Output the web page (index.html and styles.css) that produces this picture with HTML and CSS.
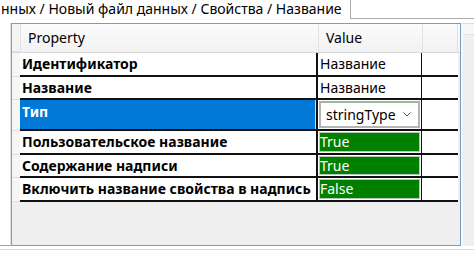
FILE: index.html
```html
<!DOCTYPE html>
<html lang="ru">
<head>
<meta charset="utf-8">
<link rel="stylesheet" href="styles.css">
</head>
<body>
<div class="tabbar">
  <div class="tab"><span class="tab-text">нных / Новый файл данных / Свойства / Название</span></div>
  <div class="tab-rest"></div>
</div>
<div class="main">
  <div class="left-gap"></div>
  <div class="grid">
    <div class="row head">
      <div class="rh"></div>
      <div class="hc">Property</div>
      <div class="hc">Value</div>
      <div class="hc last"></div>
    </div>
    <div class="row r24">
      <div class="rh"></div>
      <div class="c name">Идентификатор</div>
      <div class="c val">Название</div>
      <div class="c empty"></div>
    </div>
    <div class="row r23">
      <div class="rh"></div>
      <div class="c name">Название</div>
      <div class="c val">Название</div>
      <div class="c empty"></div>
    </div>
    <div class="row r31">
      <div class="rh"></div>
      <div class="c name sel">Тип</div>
      <div class="c val combo-cell">
        <div class="combo"><span>stringType</span>
          <svg class="chev" width="8" height="5" viewBox="0 0 8 5"><path d="M0.5 0.5 L4 4 L7.5 0.5" fill="none" stroke="#555" stroke-width="1"/></svg>
        </div>
      </div>
      <div class="c empty"></div>
    </div>
    <div class="row r24">
      <div class="rh"></div>
      <div class="c name">Пользовательское название</div>
      <div class="c val green-cell"><div class="green">True</div></div>
      <div class="c empty"></div>
    </div>
    <div class="row r23">
      <div class="rh"></div>
      <div class="c name">Содержание надписи</div>
      <div class="c val green-cell"><div class="green">True</div></div>
      <div class="c empty"></div>
    </div>
    <div class="row r24">
      <div class="rh"></div>
      <div class="c name">Включить название свойства в надпись</div>
      <div class="c val green-cell"><div class="green">False</div></div>
      <div class="c empty"></div>
    </div>
  </div>
  <div class="right-panel"><div class="rp-head"></div></div>
</div>
<div class="footer"></div>
</body>
</html>
```
FILE: styles.css
```css
html, body {
  margin: 0;
  padding: 0;
}
body {
  width: 474px;
  height: 257px;
  overflow: hidden;
  background: #ffffff;
  font-family: "Noto Sans", "Open Sans", sans-serif;
  color: #000;
}
.tabbar {
  display: flex;
  height: 19px;
}
.tab {
  width: 351px;
  box-sizing: border-box;
  border-right: 1px solid #acacac;
  white-space: nowrap;
  padding-left: 1px;
}
.tab-text {
  display: block;
  font-size: 14px;
  line-height: 17px;
  color: #000;
}
.tab-rest {
  flex: 1;
  border-bottom: 1px solid #acacac;
}
.main {
  display: flex;
  padding-top: 4px;
  height: 226px;
}
.left-gap {
  width: 11px;
  border-right: 1px solid #e3e3e3;
  border-bottom: 1px solid #a0a0a0;
  box-sizing: border-box;
  height: 223px;
}
.grid {
  width: 450px;
  height: 223px;
  box-sizing: border-box;
  border: 1px solid #7b9bc6;
  background: #efefef;
  display: flex;
  flex-direction: column;
}
.right-panel {
  flex: 1;
  height: 223px;
  border-left: 2px solid #f7f7f7;
  border-top: 1px solid #d6dde8;
  background: #efefef;
  box-sizing: border-box;
}
.rp-head {
  height: 10px;
  background: #f7f7f7;
  border-bottom: 1px solid #e2e2e2;
}
.row {
  display: grid;
  grid-template-columns: 8px 298px 104px 36px;
  box-sizing: border-box;
}
.row.head {
  height: 29px;
  background: linear-gradient(#fbfbfb, #f2f2f2);
  border-bottom: 1px solid #d9d9d9;
}
.hc {
  font-size: 14px;
  line-height: 28px;
  padding-left: 7px;
  border-left: 1px solid #e2e2e2;
  color: #000;
}
.hc.last {
  border-right: 1px solid #e2e2e2;
}
.row.head .rh {
  background: #f4f4f4;
}
.rh {
  background: #f6f6f6;
  border-bottom: 1px solid #e0e0e0;
}
.r24 { height: 24px; }
.r23 { height: 23px; }
.r31 { height: 31px; }
.c {
  background: #ffffff;
  border-bottom: 2px solid #111;
  box-sizing: border-box;
  white-space: nowrap;
  overflow: hidden;
}
.name {
  font-weight: bold;
  font-size: 14px;
  line-height: 22px;
  padding-left: 2px;
  border-right: 2px solid #111;
}
.name.sel {
  background: #0078d7;
  color: #ffffff;
  line-height: 24px;
  border-right: 2px solid #111;
  box-shadow: inset -1px 0 0 #d8d8d8;
}
.val {
  font-size: 14px;
  line-height: 22px;
  padding-left: 2px;
  border-right: 1px solid #111;
}
.green-cell {
  padding: 1px;
}
.green {
  background: #008000;
  color: #ffffff;
  height: 100%;
  box-sizing: border-box;
  border: 1px solid #b9c9b9;
  line-height: 18px;
  font-size: 14px;
}
.combo-cell {
  padding: 1px 1px 0 1px;
}
.combo {
  height: 27px;
  box-sizing: border-box;
  border: 2px solid #b4b4b4;
  border-top-color: #9ab99a;
  background: #ffffff;
  display: flex;
  align-items: center;
  justify-content: space-between;
  padding: 0 7px 0 5px;
  font-size: 14px;
}
.chev {
  margin-top: -1px;
}
.empty {
  border-right: none;
}
.footer {
  height: 8px;
  border-top: 1px solid #dadada;
}
```
